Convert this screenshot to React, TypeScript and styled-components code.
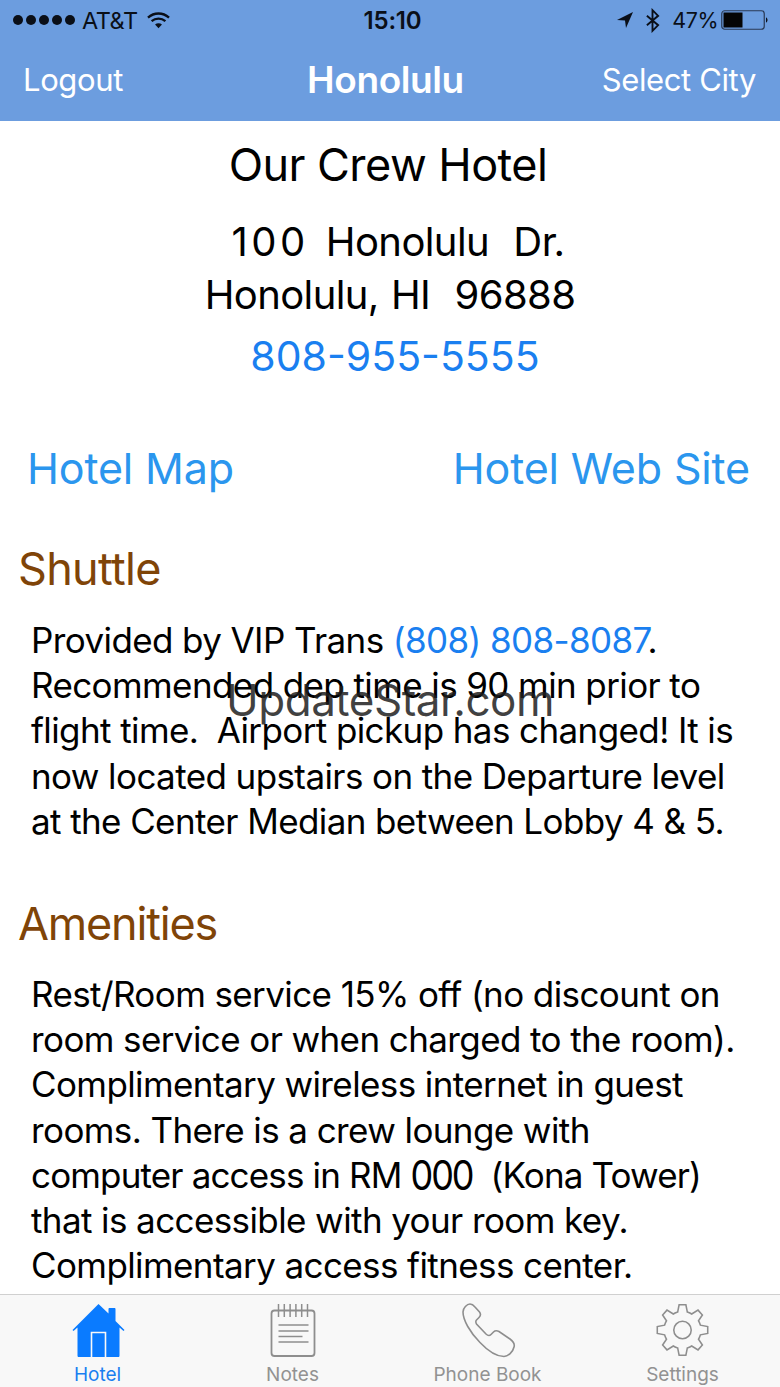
import React from "react";
import styled, { createGlobalStyle } from "styled-components";

const Global = createGlobalStyle`
  html, body { margin: 0; padding: 0; background: #fff; }
  body { font-family: Inter, "Liberation Sans", sans-serif; color: #000; }
`;

const Screen = styled.div`
  position: relative;
  width: 780px;
  height: 1387px;
  display: flex;
  flex-direction: column;
  overflow: hidden;
  background: #fff;
`;

const Header = styled.header`
  flex: none;
  height: 121px;
  background: #6c9ddf;
  display: flex;
  flex-direction: column;
`;

const StatusBar = styled.div`
  height: 40px;
  padding: 0 12px 0 13px;
  display: grid;
  grid-template-columns: 1fr auto 1fr;
  align-items: center;
  font-size: 21.5px;
  letter-spacing: -0.5px;
  color: #0a0f18;
`;

const StatusLeft = styled.div`
  display: flex;
  align-items: center;
  gap: 7px;
`;

const Carrier = styled.span`
  font-size: 23.5px;
  margin-right: 2px;
`;

const StatusRight = styled.div`
  display: flex;
  align-items: center;
  justify-content: flex-end;
  gap: 12px;
`;

const Percent = styled.span`
  margin-right: -9px;
`;

const Clock = styled.div`
  font-weight: 600;
  font-size: 24px;
  letter-spacing: -0.2px;
  padding-left: 4px;
`;

const NavBar = styled.nav`
  flex: 1;
  display: grid;
  grid-template-columns: 1fr auto 1fr;
  align-items: center;
  padding: 0 24px 2px 23px;
  color: #fff;
  font-size: 31px;
  letter-spacing: -0.38px;
`;

const NavTitle = styled.div`
  font-weight: 600;
  font-size: 37px;
  letter-spacing: -0.4px;
  position: relative;
  left: -4px;
`;

const NavRight = styled.div`
  justify-self: end;
`;

const Body = styled.main`
  flex: 1;
  min-height: 0;
  overflow: hidden;
`;

const HotelBlock = styled.section`
  display: flex;
  flex-direction: column;
  align-items: center;
  padding: 18px 0 0 0;
`;

const HotelName = styled.h1`
  margin: 0 4px 0 0;
  font-size: 45px;
  line-height: 52px;
  font-weight: 400;
  letter-spacing: -0.55px;
`;

const Address = styled.div`
  margin-top: 24px;
  font-size: 40px;
  line-height: 53px;
  letter-spacing: -0.6px;
  word-spacing: 1.5px;
  text-align: center;
  white-space: pre;
`;

const AddressLine = styled.div<{ $shift?: number }>`
  padding-left: ${(p) => p.$shift ?? 0}px;
`;

const StreetNumber = styled.span`
  letter-spacing: 3.5px;
  margin-right: 5px;
`;

const Phone = styled.a`
  margin-top: 9px;
  font-size: 41px;
  line-height: 52px;
  letter-spacing: 0;
  color: #1a7ff0;
  padding-left: 10px;
`;

const LinkRow = styled.div`
  display: flex;
  justify-content: space-between;
  padding: 59px 30px 0 27px;
  font-size: 43px;
  line-height: 54px;
  letter-spacing: -0.15px;
  color: #2b96ee;
`;

const Section = styled.section<{ $top: number }>`
  padding-top: ${(p) => p.$top}px;
`;

const SectionTitle = styled.h2<{ $tracking: number }>`
  margin: 0;
  padding-left: 18px;
  font-size: 45px;
  line-height: 54px;
  font-weight: 400;
  letter-spacing: ${(p) => p.$tracking}px;
  color: #7f4408;
`;

const Paragraph = styled.p<{ $gap: number }>`
  margin: ${(p) => p.$gap}px 0 0;
  padding: 0 30px 0 31px;
  font-size: 35px;
  line-height: 45.2px;
  letter-spacing: -0.6px;
  white-space: pre;
`;

const InlineLink = styled.span`
  color: #1a7ff0;
`;

const TightRun = styled.span`
  letter-spacing: -0.85px;
`;

const Wide = styled.span`
  display: inline-block;
  font-size: 36px;
  letter-spacing: -2px;
  transform: scaleY(1.15);
`;

const Watermark = styled.div`
  position: absolute;
  left: 226px;
  top: 674px;
  font-size: 44px;
  line-height: 52px;
  letter-spacing: -0.5px;
  color: rgba(30, 30, 30, 0.85);
  pointer-events: none;
`;

const TabBar = styled.footer`
  flex: none;
  height: 93px;
  box-sizing: border-box;
  border-top: 1px solid #d0d0d0;
  background: #f8f8f8;
  display: grid;
  grid-template-columns: repeat(4, 195px);
`;

const Tab = styled.div<{ $active?: boolean }>`
  display: flex;
  flex-direction: column;
  align-items: center;
  padding-top: 7px;
  color: ${(p) => (p.$active ? "#1a7ff0" : "#929292")};
  font-size: 19px;
  line-height: 24px;
`;

const TabIcon = styled.svg`
  display: block;
  width: 56px;
  height: 56px;
`;

const TabLabel = styled.span`
  margin-top: 5px;
`;

const Signal = () => (
  <svg width="62" height="14" viewBox="0 0 62 14">
    {[5, 18, 31, 44, 57].map((x) => (
      <circle key={x} cx={x} cy="7" r="5" fill="#0a0f18" />
    ))}
  </svg>
);

const Wifi = () => (
  <svg width="23" height="18" viewBox="0 0 24 18" fill="none" stroke="#0a0f18" strokeWidth="2.4">
    <path d="M1 6.5C7.5 0.8 16.5 0.8 23 6.5" />
    <path d="M4.8 10.2C9 6.6 15 6.6 19.2 10.2" />
    <path d="M12 17.5L8.4 13.6C10.4 12 13.6 12 15.6 13.6Z" fill="#0a0f18" stroke="none" />
  </svg>
);

const Arrow = () => (
  <svg width="16" height="16" viewBox="0 0 16 16">
    <path d="M16 0L0 8L8 8.5L9 16Z" fill="#0a0f18" />
  </svg>
);

const Bluetooth = () => (
  <svg width="15" height="25" viewBox="0 0 16 24" fill="none" stroke="#0a0f18" strokeWidth="2">
    <path d="M2 7L14 17L8 23V1L14 7L2 17" />
  </svg>
);

const Battery = () => (
  <svg width="47" height="20" viewBox="0 0 47 20">
    <rect x="0.75" y="0.75" width="42.5" height="18.5" rx="3" fill="none" stroke="#2a3a55" strokeWidth="1.2" />
    <rect x="2.5" y="2.5" width="19" height="15" fill="#050505" />
    <path d="M45 7.500C47 8 47 12 45 12.500Z" fill="#0a0f18" />
  </svg>
);

const HouseIcon = () => (
  <TabIcon viewBox="0 0 56 56">
    <path
      fill="#0a7bff"
      d="M28.500 2L38.500 11.500V7C38.500 6.400 39 6 39.500 6H44.500C45 6 45.500 6.400 45.500 7V19L54.500 28L53.500 29L49.500 25.500V53.500C49.500 54.500 49 55 48 55H9C8 55 7.500 54.500 7.500 53.500V25.500L3.500 29L2.500 28Z"
    />
    <path d="M21.500 55V30.500H35.500V55" fill="none" stroke="#f8f8f8" strokeWidth="1.600" />
  </TabIcon>
);

const NotesIcon = () => (
  <TabIcon viewBox="0 0 56 56" fill="none" stroke="#8e8e8e">
    <rect x="6.500" y="8.500" width="43" height="45.500" rx="3" strokeWidth="1.800" />
    <path d="M13.500 2V15M19.300 2V15M25.100 2V15M30.900 2V15M36.700 2V15M42.500 2V15" strokeWidth="1.500" />
    <path d="M13.500 23H43.500M13.500 29H43.500M13.500 34.500H37.500M13.500 40H43.500" strokeWidth="1.600" />
  </TabIcon>
);

const PhoneIcon = () => (
  <TabIcon viewBox="0 0 56 56" fill="none" stroke="#8e8e8e" strokeWidth="1.600">
    <path d="M3 10C3 6 7 2 10 2C12 2 13 2.500 15 5L19.500 10C21 12 20.500 14 19 15.500L16.500 18C15.500 19 15.500 20 16.500 22L26 32C28 34 29.500 34 31 32.500L33.500 30C35 28.500 37 28.500 39 29.500L50 37C54 40 55 42 54 45C53 50 48 54.500 44 54.500C38 54.500 29 50 20 40.500C10 30.500 3 18 3 10Z" />
  </TabIcon>
);

const GearIcon = () => (
  <TabIcon viewBox="0 0 56 56" fill="none" stroke="#8e8e8e" strokeWidth="1.600">
    <g transform="translate(27.500 28) scale(0.97) translate(-28 -28)">
      <circle cx="28" cy="28" r="9" />
      <path d="M24.500 2H31.500L33 9.500C34.500 10 36 10.500 37.500 11.500L44 7.500L48.500 12.500L44.500 18.500C45.500 20 46 21.500 46.500 23L54 24.500V31.500L46.500 33C46 34.500 45.500 36 44.500 37.500L48.500 43.500L44 48.500L37.500 44.500C36 45.500 34.500 46 33 46.500L31.500 54H24.500L23 46.500C21.500 46 20 45.500 18.500 44.500L12 48.500L7.500 43.500L11.500 37.500C10.500 36 10 34.500 9.500 33L2 31.500V24.500L9.500 23C10 21.500 10.500 20 11.500 18.500L7.500 12.500L12 7.500L18.500 11.500C20 10.500 21.500 10 23 9.500Z" />
    </g>
  </TabIcon>
);

export default function App() {
  return (
    <Screen>
      <Global />
      <Header>
        <StatusBar>
          <StatusLeft>
            <Signal />
            <Carrier>AT&amp;T</Carrier>
            <Wifi />
          </StatusLeft>
          <Clock>15:10</Clock>
          <StatusRight>
            <Arrow />
            <Bluetooth />
            <Percent>47%</Percent>
            <Battery />
          </StatusRight>
        </StatusBar>
        <NavBar>
          <span>Logout</span>
          <NavTitle>Honolulu</NavTitle>
          <NavRight>Select City</NavRight>
        </NavBar>
      </Header>
      <Body>
        <HotelBlock>
          <HotelName>Our Crew Hotel</HotelName>
          <Address>
            <AddressLine $shift={16}>
              <StreetNumber>100</StreetNumber>
              {" Honolulu  Dr."}
            </AddressLine>
            <AddressLine>{"Honolulu, HI  96888"}</AddressLine>
          </Address>
          <Phone>808-955-5555</Phone>
        </HotelBlock>
        <LinkRow>
          <span>Hotel Map</span>
          <span>Hotel Web Site</span>
        </LinkRow>
        <Section $top={47}>
          <SectionTitle $tracking={-0.7}>Shuttle</SectionTitle>
          <Paragraph $gap={22}>
            Provided by VIP Trans <InlineLink>(808) 808-8087</InlineLink>.{"\n"}
            {"Recommended dep time is 90 min prior to\nflight time.  Airport pickup has changed! It is\nnow located upstairs on the Departure level\nat the Center Median between Lobby 4 & 5."}
          </Paragraph>
        </Section>
        <Section $top={53}>
          <SectionTitle $tracking={-1.2}>Amenities</SectionTitle>
          <Paragraph $gap={21}>
            {"Rest/Room service 15% off (no discount on\nroom service or when charged to the room).\nComplimentary wireless internet in guest\nrooms. There is a crew lounge with\n"}
            <TightRun>{"computer access in RM "}</TightRun>
            <Wide>000</Wide>
            <TightRun>{"  (Kona Tower)"}</TightRun>
            {"\nthat is accessible with your room key.\nComplimentary access fitness center."}
          </Paragraph>
        </Section>
      </Body>
      <TabBar>
        <Tab $active>
          <HouseIcon />
          <TabLabel>Hotel</TabLabel>
        </Tab>
        <Tab>
          <NotesIcon />
          <TabLabel>Notes</TabLabel>
        </Tab>
        <Tab>
          <PhoneIcon />
          <TabLabel>Phone Book</TabLabel>
        </Tab>
        <Tab>
          <GearIcon />
          <TabLabel>Settings</TabLabel>
        </Tab>
      </TabBar>
      <Watermark>UpdateStar.com</Watermark>
    </Screen>
  );
}
